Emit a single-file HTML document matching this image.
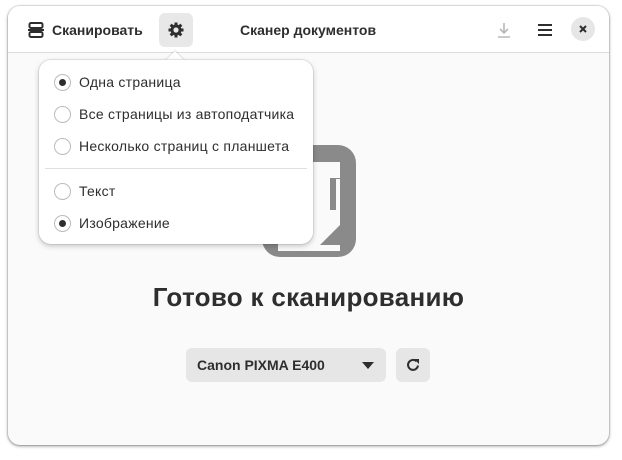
<!DOCTYPE html>
<html><head><meta charset="utf-8"><style>
*{box-sizing:border-box;margin:0;padding:0}
body{width:622px;height:460px;background:#fff;font-family:"Liberation Sans","DejaVu Sans",sans-serif;position:relative;overflow:hidden;color:#2e2e2e}
.win{position:absolute;left:8px;top:6px;width:601px;height:439px;border-radius:12px;background:#fafafa;box-shadow:0 1px 3px rgba(0,0,0,.45),0 0 0 1px rgba(0,0,0,.08);overflow:hidden}
.hdr{position:absolute;left:0;top:0;width:100%;height:47px;background:#fff;border-bottom:1px solid #dcdcdc}
.t{position:absolute;font-size:14px;font-weight:bold;color:#2e2e2e}
.pop{position:absolute;left:39px;top:60px;width:274px;height:184px;background:#fff;border-radius:12px;box-shadow:0 2px 6px rgba(0,0,0,.22),0 0 0 1px rgba(0,0,0,.07)}
.arrow{position:absolute;left:168px;top:54px;width:14px;height:14px;background:#fff;transform:rotate(45deg);box-shadow:-1px -1px 1px rgba(0,0,0,.1)}
.it{position:absolute;left:15px;font-size:14px;letter-spacing:0.25px;color:#2e2e2e;display:flex;align-items:center;height:20px}
.r{width:17px;height:17px;border:1px solid #bbb;border-radius:50%;margin-right:8px;position:relative;background:#fff}
.r.on::after{content:"";position:absolute;left:4px;top:4px;width:7px;height:7px;border-radius:50%;background:#2e2e2e}
</style></head><body>
<div class="win">
 <div class="hdr">
  <svg style="position:absolute;left:20px;top:16px" width="16" height="16" viewBox="0 0 16 16"><rect x="1.5" y="1" width="13" height="5" rx="1.5" fill="none" stroke="#2e2e2e" stroke-width="2"/><rect x="0" y="7" width="16" height="2" fill="#2e2e2e"/><rect x="1.5" y="10" width="13" height="5" rx="1.5" fill="none" stroke="#2e2e2e" stroke-width="2"/></svg>
  <div class="t" style="left:44px;top:16px">Сканировать</div>
  <div style="position:absolute;left:151px;top:7px;width:34px;height:34px;border-radius:6px;background:#e8e8e8"></div>
  <svg style="position:absolute;left:160px;top:16px" width="16" height="16" viewBox="0 0 16 16"><g fill="#2e2e2e"><circle cx="8" cy="8" r="5.5"/><rect x="6.5" y="0.5" width="3" height="15"/><rect x="0.5" y="6.5" width="15" height="3"/><rect x="6.5" y="0.5" width="3" height="15" transform="rotate(45 8 8)"/><rect x="6.5" y="0.5" width="3" height="15" transform="rotate(-45 8 8)"/></g><circle cx="8" cy="8" r="2.6" fill="#e8e8e8"/></svg>
  <div class="t" style="left:232px;top:16px">Сканер документов</div>
  <svg style="position:absolute;left:489px;top:16px" width="14" height="16" viewBox="0 0 14 16"><path d="M7 1v10M3 7l4 4 4-4M1 15h12" stroke="#b8b8b8" stroke-width="1.6" fill="none"/></svg>
  <svg style="position:absolute;left:529px;top:17px" width="16" height="14" viewBox="0 0 16 14"><path d="M1 2h14M1 7h14M1 12h14" stroke="#2e2e2e" stroke-width="2"/></svg>
  <div style="position:absolute;left:563px;top:11px;width:24px;height:24px;border-radius:50%;background:#e6e6e6"></div>
  <svg style="position:absolute;left:571px;top:19px" width="8" height="8" viewBox="0 0 8 8"><path d="M1 1l6 6M7 1L1 7" stroke="#2e2e2e" stroke-width="2"/></svg>
 </div>
 <svg style="position:absolute;left:254px;top:139px" width="94" height="112" viewBox="0 0 94 112"><rect x="0" y="0" width="94" height="112" rx="18" fill="#8a8a8a"/><path d="M16 17h62v16h-10v32h10v41H16z" fill="#fafafa"/><path d="M78 34v31h-4V34z" fill="#fafafa"/><path d="M78 80L58 100H78z" fill="#8a8a8a"/></svg>
 <div style="position:absolute;left:0;width:100%;top:276px;text-align:center;font-size:26px;font-weight:bold;color:#2e2e2e;letter-spacing:0.3px">Готово к сканированию</div>
 <div style="position:absolute;left:178px;top:342px;width:200px;height:34px;border-radius:6px;background:#e6e6e6"></div>
 <div class="t" style="left:189px;top:351px">Canon PIXMA E400</div>
 <svg style="position:absolute;left:354px;top:356px" width="12" height="7" viewBox="0 0 12 7"><path d="M0 0h12L6 7z" fill="#2e2e2e"/></svg>
 <div style="position:absolute;left:388px;top:342px;width:34px;height:34px;border-radius:6px;background:#e6e6e6"></div>
 <svg style="position:absolute;left:397px;top:351px" width="16" height="16" viewBox="0 0 16 16"><path d="M13 8.5A5 5 0 1 1 11.5 4.3" stroke="#2e2e2e" stroke-width="2" fill="none"/><path d="M9 2h5v5z" fill="#2e2e2e"/></svg>
</div>
<div class="arrow"></div>
<div class="pop">
 <div class="it" style="top:12px"><span class="r on"></span>Одна страница</div>
 <div class="it" style="top:44px"><span class="r"></span>Все страницы из автоподатчика</div>
 <div class="it" style="top:76px"><span class="r"></span>Несколько страниц с планшета</div>
 <div style="position:absolute;left:6px;right:6px;top:108px;height:1px;background:#e0e0e0"></div>
 <div class="it" style="top:121px"><span class="r"></span>Текст</div>
 <div class="it" style="top:153px"><span class="r on"></span>Изображение</div>
</div>
</body></html>
